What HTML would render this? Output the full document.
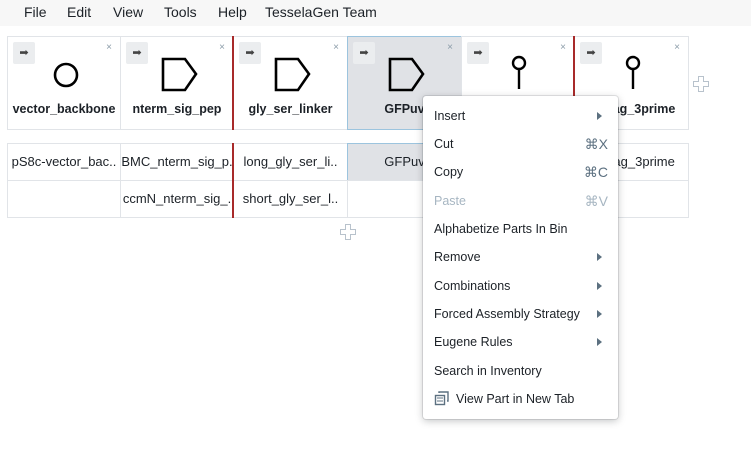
<!DOCTYPE html>
<html><head><style>
*{box-sizing:border-box;margin:0;padding:0}
body{width:751px;height:450px;background:#fff;font-family:"Liberation Sans",sans-serif;position:relative;overflow:hidden;color:#1c2127}
.menubar{position:absolute;left:0;top:0;width:751px;height:26px;background:#f7f7f7}
.menubar span{position:absolute;top:4px;font-size:14px;color:#1c2127}
.card{position:absolute;top:36px;height:94px;border:1px solid #e1e4e8;background:#fff}
.card.sel{background:#e0e2e6;border-color:#9cc4de}
.arr{position:absolute;left:5px;top:5px;width:22px;height:22px;background:#ebedef;border-radius:2px;font-size:11px;text-align:center;line-height:22px;color:#444}
.x{position:absolute;right:8px;top:5px;font-size:10px;color:#8a9ba8}
.lab{position:absolute;left:0;right:0;top:65px;text-align:center;font-size:12.5px;font-weight:bold;white-space:nowrap}
.cell{position:absolute;height:38px;border:1px solid #e1e4e8;font-size:13px;text-align:center;line-height:36px;white-space:nowrap;overflow:hidden}
.cell.sel{background:#e0e2e6;border-color:#9cc4de}
.red{position:absolute;width:2px;background:#a82a2a}
.menu{position:absolute;left:423px;top:96px;width:195px;height:323px;background:#fff;border-radius:3px;box-shadow:0 0 0 1px rgba(16,22,26,.1),0 2px 8px rgba(16,22,26,.25)}
.mi{position:absolute;left:11px;right:10px;font-size:12.5px;color:#1c2127}
.mi .r{position:absolute;right:0;top:-1px;color:#5c7080;font-size:14px}
.tri{position:absolute;right:6px;top:3px;width:0;height:0;border-left:5px solid #5c7080;border-top:4px solid transparent;border-bottom:4px solid transparent}
.plus{position:absolute}
</style></head><body>
<div class="menubar">
<span style="left:24px">File</span><span style="left:67px">Edit</span><span style="left:113px">View</span><span style="left:164px">Tools</span><span style="left:218px">Help</span><span style="left:265px">TesselaGen Team</span>
</div>

<div class="card" style="left:7px;width:114px"><div class="arr">➡</div><div class="x">×</div>
<svg style="position:absolute;left:44px;top:24px" width="28" height="28"><circle cx="14" cy="14" r="11" fill="none" stroke="#000" stroke-width="2.6"/></svg>
<div class="lab">vector_backbone</div></div>
<div class="card" style="left:120px;width:114px"><div class="arr">➡</div><div class="x">×</div>
<svg style="position:absolute;left:40px;top:20px" width="38" height="36"><path d="M2 2H24L35 17L24 33H2Z" fill="none" stroke="#000" stroke-width="2.6"/></svg>
<div class="lab">nterm_sig_pep</div></div>
<div class="card" style="left:233px;width:115px"><div class="arr">➡</div><div class="x">×</div>
<svg style="position:absolute;left:40px;top:20px" width="38" height="36"><path d="M2 2H24L35 17L24 33H2Z" fill="none" stroke="#000" stroke-width="2.6"/></svg>
<div class="lab">gly_ser_linker</div></div>
<div class="card sel" style="left:347px;width:115px"><div class="arr">➡</div><div class="x">×</div>
<svg style="position:absolute;left:40px;top:20px" width="38" height="36"><path d="M2 2H24L35 17L24 33H2Z" fill="none" stroke="#000" stroke-width="2.6"/></svg>
<div class="lab">GFPuv</div></div>
<div class="card" style="left:461px;width:114px"><div class="arr">➡</div><div class="x">×</div>
<svg style="position:absolute;left:47px;top:17px" width="20" height="36"><circle cx="10" cy="9" r="6" fill="none" stroke="#000" stroke-width="2.4"/><path d="M10 15V35" stroke="#000" stroke-width="2.4"/></svg>
<div class="lab">terminator</div></div>
<div class="card" style="left:574px;width:115px"><div class="arr">➡</div><div class="x">×</div>
<svg style="position:absolute;left:48px;top:17px" width="20" height="36"><circle cx="10" cy="9" r="6" fill="none" stroke="#000" stroke-width="2.4"/><path d="M10 15V35" stroke="#000" stroke-width="2.4"/></svg>
<div class="lab">&nbsp;&nbsp;&nbsp;&nbsp;&nbsp;&nbsp;tag_3prime</div></div>

<div class="cell" style="left:7px;top:143px;width:114px">pS8c-vector_bac..</div>
<div class="cell" style="left:120px;top:143px;width:114px">BMC_nterm_sig_p.</div>
<div class="cell" style="left:233px;top:143px;width:115px">long_gly_ser_li..</div>
<div class="cell sel" style="left:347px;top:143px;width:115px">GFPuv</div>
<div class="cell" style="left:461px;top:143px;width:114px">term</div>
<div class="cell" style="left:574px;top:143px;width:115px">&nbsp;&nbsp;&nbsp;&nbsp;&nbsp;&nbsp;tag_3prime</div>
<div class="cell" style="left:7px;top:180px;width:114px"></div>
<div class="cell" style="left:120px;top:180px;width:114px">ccmN_nterm_sig_.</div>
<div class="cell" style="left:233px;top:180px;width:115px">short_gly_ser_l..</div>
<div class="cell" style="left:347px;top:180px;width:115px"></div>
<div class="cell" style="left:461px;top:180px;width:114px"></div>
<div class="cell" style="left:574px;top:180px;width:115px"></div>

<div class="red" style="left:232px;top:36px;height:94px"></div>
<div class="red" style="left:232px;top:143px;height:75px"></div>
<div class="red" style="left:573px;top:36px;height:94px"></div>
<div class="red" style="left:573px;top:143px;height:75px"></div>

<svg class="plus" style="left:693px;top:76px" width="16" height="16"><path d="M5.5 0.5H10.5V5.5H15.5V10.5H10.5V15.5H5.5V10.5H0.5V5.5H5.5Z" fill="#fff" stroke="#b8c2cc"/></svg>
<svg class="plus" style="left:340px;top:224px" width="16" height="16"><path d="M5.5 0.5H10.5V5.5H15.5V10.5H10.5V15.5H5.5V10.5H0.5V5.5H5.5Z" fill="#fff" stroke="#b8c2cc"/></svg>

<div class="menu">
<div class="mi" style="top:13px">Insert<div class="tri"></div></div>
<div class="mi" style="top:41px">Cut<span class="r">⌘X</span></div>
<div class="mi" style="top:69px">Copy<span class="r">⌘C</span></div>
<div class="mi" style="top:98px;color:#a7b6c2">Paste<span class="r" style="color:#a7b6c2">⌘V</span></div>
<div class="mi" style="top:126px">Alphabetize Parts In Bin</div>
<div class="mi" style="top:154px">Remove<div class="tri"></div></div>
<div class="mi" style="top:183px">Combinations<div class="tri"></div></div>
<div class="mi" style="top:211px">Forced Assembly Strategy<div class="tri"></div></div>
<div class="mi" style="top:239px">Eugene Rules<div class="tri"></div></div>
<div class="mi" style="top:268px">Search in Inventory</div>
<div class="mi" style="top:296px"><svg style="position:absolute;left:0;top:-2px" width="16" height="16"><rect x="1.5" y="5.5" width="9" height="9" fill="none" stroke="#5c7080" stroke-width="1.4"/><path d="M5 3V2H14V11H13" fill="none" stroke="#5c7080" stroke-width="1.4"/><path d="M3 8H9M3 11H9" stroke="#5c7080"/></svg><span style="margin-left:22px">View Part in New Tab</span></div>
</div>
</body></html>
